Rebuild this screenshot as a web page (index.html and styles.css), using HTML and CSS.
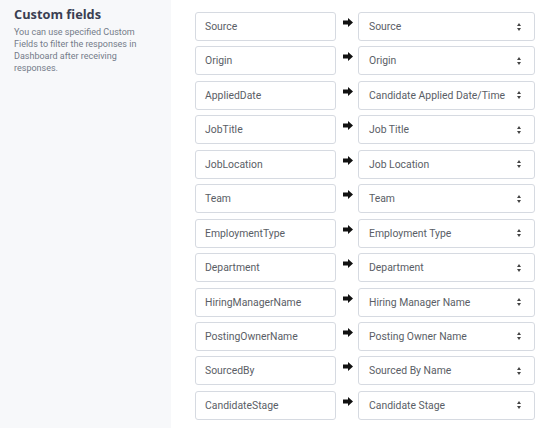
FILE: index.html
```html
<!DOCTYPE html>
<html>
<head>
<meta charset="utf-8">
<link rel="stylesheet" href="styles.css">
</head>
<body>
<div class="page">
  <aside class="side">
    <h2 class="title">Custom fields</h2>
    <p class="desc">You can use specified Custom Fields to filter the responses in Dashboard after receiving responses.</p>
  </aside>
  <main class="main">
    <div class="rows">
      <div class="row"><div class="field">Source</div><span class="arrow"><svg viewBox="0 0 10 9" width="10" height="9"><path d="M0 2.6h5V0l5 4.5L5 9V6.4H0z" fill="#111"/></svg></span><div class="select"><span>Source</span><span class="caret"></span></div></div>
      <div class="row"><div class="field">Origin</div><span class="arrow"><svg viewBox="0 0 10 9" width="10" height="9"><path d="M0 2.6h5V0l5 4.5L5 9V6.4H0z" fill="#111"/></svg></span><div class="select"><span>Origin</span><span class="caret"></span></div></div>
      <div class="row"><div class="field">AppliedDate</div><span class="arrow"><svg viewBox="0 0 10 9" width="10" height="9"><path d="M0 2.6h5V0l5 4.5L5 9V6.4H0z" fill="#111"/></svg></span><div class="select"><span>Candidate Applied Date/Time</span><span class="caret"></span></div></div>
      <div class="row"><div class="field">JobTitle</div><span class="arrow"><svg viewBox="0 0 10 9" width="10" height="9"><path d="M0 2.6h5V0l5 4.5L5 9V6.4H0z" fill="#111"/></svg></span><div class="select"><span>Job Title</span><span class="caret"></span></div></div>
      <div class="row"><div class="field">JobLocation</div><span class="arrow"><svg viewBox="0 0 10 9" width="10" height="9"><path d="M0 2.6h5V0l5 4.5L5 9V6.4H0z" fill="#111"/></svg></span><div class="select"><span>Job Location</span><span class="caret"></span></div></div>
      <div class="row"><div class="field">Team</div><span class="arrow"><svg viewBox="0 0 10 9" width="10" height="9"><path d="M0 2.6h5V0l5 4.5L5 9V6.4H0z" fill="#111"/></svg></span><div class="select"><span>Team</span><span class="caret"></span></div></div>
      <div class="row"><div class="field">EmploymentType</div><span class="arrow"><svg viewBox="0 0 10 9" width="10" height="9"><path d="M0 2.6h5V0l5 4.5L5 9V6.4H0z" fill="#111"/></svg></span><div class="select"><span>Employment Type</span><span class="caret"></span></div></div>
      <div class="row"><div class="field">Department</div><span class="arrow"><svg viewBox="0 0 10 9" width="10" height="9"><path d="M0 2.6h5V0l5 4.5L5 9V6.4H0z" fill="#111"/></svg></span><div class="select"><span>Department</span><span class="caret"></span></div></div>
      <div class="row"><div class="field">HiringManagerName</div><span class="arrow"><svg viewBox="0 0 10 9" width="10" height="9"><path d="M0 2.6h5V0l5 4.5L5 9V6.4H0z" fill="#111"/></svg></span><div class="select"><span>Hiring Manager Name</span><span class="caret"></span></div></div>
      <div class="row"><div class="field">PostingOwnerName</div><span class="arrow"><svg viewBox="0 0 10 9" width="10" height="9"><path d="M0 2.6h5V0l5 4.5L5 9V6.4H0z" fill="#111"/></svg></span><div class="select"><span>Posting Owner Name</span><span class="caret"></span></div></div>
      <div class="row"><div class="field">SourcedBy</div><span class="arrow"><svg viewBox="0 0 10 9" width="10" height="9"><path d="M0 2.6h5V0l5 4.5L5 9V6.4H0z" fill="#111"/></svg></span><div class="select"><span>Sourced By Name</span><span class="caret"></span></div></div>
      <div class="row"><div class="field">CandidateStage</div><span class="arrow"><svg viewBox="0 0 10 9" width="10" height="9"><path d="M0 2.6h5V0l5 4.5L5 9V6.4H0z" fill="#111"/></svg></span><div class="select"><span>Candidate Stage</span><span class="caret"></span></div></div>
    </div>
  </main>
</div>
</body>
</html>
```
FILE: styles.css
```css
html, body {
  margin: 0;
  padding: 0;
  background: #ffffff;
}
body {
  font-family: Roboto, "Liberation Sans", sans-serif;
}
.page {
  display: flex;
  height: 428px;
}
.side {
  width: 171px;
  flex: none;
  background: #f7f8fa;
  padding: 6px 14px 0 14px;
  box-sizing: border-box;
}
.title {
  margin: 0;
  font-family: "Open Sans", "Liberation Sans", sans-serif;
  font-weight: 700;
  font-size: 12.8px;
  line-height: 16px;
  color: #3a3f52;
}
.desc {
  margin: 4px 0 0;
  max-width: 136px;
  font-family: Roboto, "Liberation Sans", sans-serif;
  font-size: 9px;
  line-height: 12px;
  color: #747b89;
}
.main {
  flex: 1;
  padding: 12px 0 0 24px;
}
.rows {
  display: flex;
  flex-direction: column;
  gap: 5.45px;
}
.row {
  display: flex;
  align-items: flex-start;
  height: 29px;
}
.field, .select {
  box-sizing: border-box;
  height: 29px;
  border: 1px solid #d6dae1;
  border-radius: 3px;
  font-size: 10.4px;
  color: #5a5e66;
  display: flex;
  align-items: center;
  background: #fff;
}
.field {
  width: 141px;
  padding-left: 9px;
}
.arrow {
  width: 22px;
  display: flex;
  justify-content: center;
  padding-top: 6px;
  padding-left: 1px;
  box-sizing: border-box;
}
.select {
  width: 177px;
  padding: 0 12px 0 10px;
  justify-content: space-between;
}
.caret {
  width: 5px;
  height: 8px;
  position: relative;
}
.caret::before, .caret::after {
  content: "";
  position: absolute;
  left: 0;
  border-left: 2.5px solid transparent;
  border-right: 2.5px solid transparent;
}
.caret::before {
  top: 0;
  border-bottom: 3px solid #444;
}
.caret::after {
  bottom: 0;
  border-top: 3px solid #444;
}
```
